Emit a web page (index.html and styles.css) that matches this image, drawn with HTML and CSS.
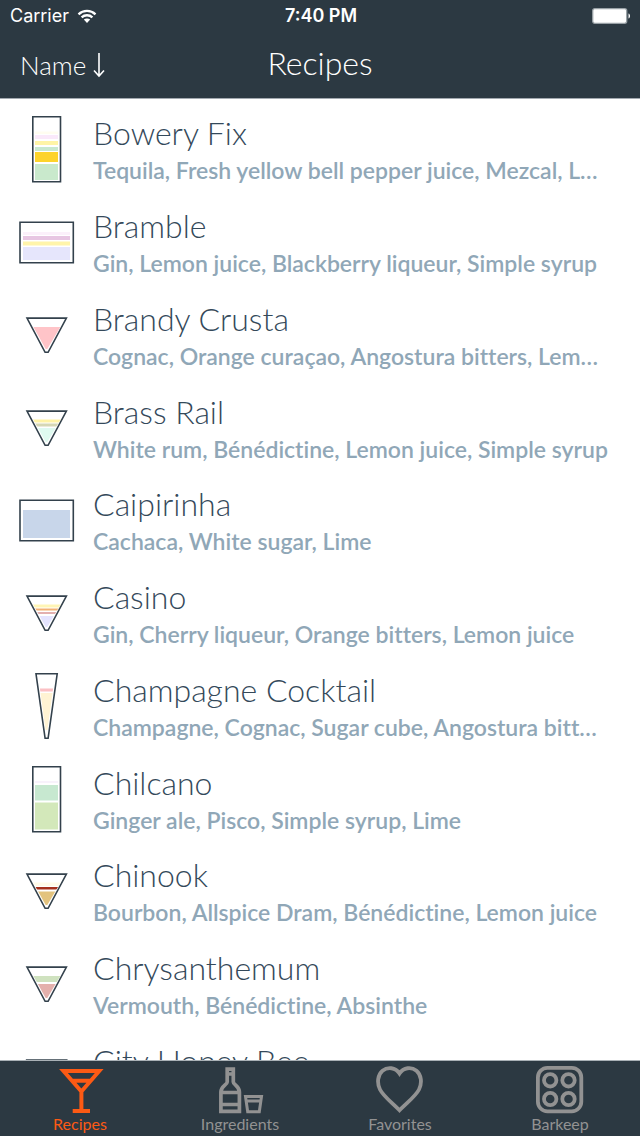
FILE: index.html
```html
<!DOCTYPE html>
<html lang="en">
<head>
<meta charset="utf-8">
<meta name="viewport" content="width=device-width">
<title>Recipes</title>
<link rel="stylesheet" href="styles.css">
</head>
<body>
<svg class="defs" aria-hidden="true">
  <defs>
    <clipPath id="cone"><path d="M11.5 19H46.5L29.3 48H27.7Z"/></clipPath>
    <clipPath id="fluted"><path d="M20.5 6H36.5L29.5 58H27.5Z"/></clipPath>
    <symbol id="highball" viewBox="0 0 57 69"><path class="outline" d="M14.8 1.8H42.5V66.8H14.8Z"/></symbol>
    <symbol id="rocks" viewBox="0 0 57 69"><path class="outline" d="M2 14.2H55.3V54.8H2Z"/></symbol>
    <symbol id="coupe" viewBox="0 0 57 69"><path class="outline" d="M9 17.1H48.4L30.1 51.3H27.1Z"/></symbol>
    <symbol id="flute" viewBox="0 0 57 69"><path class="outline" d="M18 1.8H39.2L30.1 66.3H27.1Z"/></symbol>
  </defs>
</svg>
<header class="top">
  <div class="status">
    <div class="carrier">Carrier
      <svg class="wifi" viewBox="0 0 20 15" aria-hidden="true"><path d="M1.5 5.3C6.3.7 13.7.7 18.500 5.300M4.600 8.400C7.700 5.500 12.300 5.500 15.400 8.400" fill="none" stroke="#fff" stroke-width="2.300"/><path d="M6.800 10.600C8.700 9 11.300 9 13.200 10.600L10 14Z" fill="#fff"/></svg>
    </div>
    <time class="clock">7:40 PM</time>
    <svg class="battery" viewBox="0 0 40 16" aria-hidden="true"><rect x=".7" y=".7" width="34" height="14.600" rx="2" fill="#fff" stroke="#98a0a5" stroke-width="1.300"/><path d="M36.500 5.500C38.500 6 38.500 10 36.500 10.500Z" fill="#fff"/></svg>
  </div>
  <nav class="navbar">
    <button class="sort" type="button">Name
      <svg class="arrow" viewBox="0 0 12 26" aria-hidden="true"><path d="M6 1V24M1 18.500L6 24L11 18.500" fill="none" stroke="#fff" stroke-width="1.600"/></svg>
    </button>
    <h1 class="title">Recipes</h1>
  </nav>
</header>
<main class="content">
  <ul class="recipes">
    <li class="recipe">
      <svg class="glass" viewBox="0 0 57 69" aria-hidden="true"><use href="#highball"/><path fill="#fffdf0" d="M17 16.500h23v2.500H17z"/><path fill="#fae9fa" d="M17 20h23v4H17z"/><path fill="#fff4a6" d="M17 26h23v4H17z"/><path fill="#c8e8cf" d="M17 32h23v4H17z"/><path fill="#fdd32b" d="M17 37h23v10H17z"/><path fill="#c9e9cc" d="M17 49h23v16H17z"/></svg>
      <div class="info"><h2 class="name">Bowery Fix</h2><p class="parts">Tequila, Fresh yellow bell pepper juice, Mezcal, L…</p></div>
    </li>
    <li class="recipe">
      <svg class="glass" viewBox="0 0 57 69" aria-hidden="true"><use href="#rocks"/><path fill="#fbf0fa" d="M5 24h47v3H5z"/><path fill="#e7c6e2" d="M5 28h47v4H5z"/><path fill="#fff4aa" d="M5 33.500h47v4H5z"/><path fill="#e6e6fc" d="M5 39h47v13H5z"/></svg>
      <div class="info"><h2 class="name">Bramble</h2><p class="parts">Gin, Lemon juice, Blackberry liqueur, Simple syrup</p></div>
    </li>
    <li class="recipe">
      <svg class="glass" viewBox="0 0 57 69" aria-hidden="true"><use href="#coupe"/><g clip-path="url(#cone)"><path fill="#ffc4c8" d="M8 26h42v23H8z"/></g></svg>
      <div class="info"><h2 class="name">Brandy Crusta</h2><p class="parts">Cognac, Orange curaçao, Angostura bitters, Lem…</p></div>
    </li>
    <li class="recipe">
      <svg class="glass" viewBox="0 0 57 69" aria-hidden="true"><use href="#coupe"/><g clip-path="url(#cone)"><path fill="#fff3a5" d="M8 25.500h42v3H8z"/><path fill="#d6d7b4" d="M8 29.500h42v3H8z"/><path fill="#dffaf0" d="M8 34h42v15H8z"/></g></svg>
      <div class="info"><h2 class="name">Brass Rail</h2><p class="parts">White rum, Bénédictine, Lemon juice, Simple syrup</p></div>
    </li>
    <li class="recipe">
      <svg class="glass" viewBox="0 0 57 69" aria-hidden="true"><use href="#rocks"/><path fill="#c8d6ea" d="M5 24h47v28H5z"/></svg>
      <div class="info"><h2 class="name">Caipirinha</h2><p class="parts">Cachaca, White sugar, Lime</p></div>
    </li>
    <li class="recipe">
      <svg class="glass" viewBox="0 0 57 69" aria-hidden="true"><use href="#coupe"/><g clip-path="url(#cone)"><path fill="#fff5b5" d="M8 25.500h42v3H8z"/><path fill="#f3b173" d="M8 29.500h42v2H8z"/><path fill="#e3b0b0" d="M8 33h42v2H8z"/><path fill="#e4e4ff" d="M8 37h42v12H8z"/></g></svg>
      <div class="info"><h2 class="name">Casino</h2><p class="parts">Gin, Cherry liqueur, Orange bitters, Lemon juice</p></div>
    </li>
    <li class="recipe">
      <svg class="glass" viewBox="0 0 57 69" aria-hidden="true"><use href="#flute"/><g clip-path="url(#fluted)"><path fill="#fbc0c4" d="M17 16.500h23v3H17z"/><path fill="#fff3d3" d="M17 21h23v40H17z"/></g></svg>
      <div class="info"><h2 class="name">Champagne Cocktail</h2><p class="parts">Champagne, Cognac, Sugar cube, Angostura bitt…</p></div>
    </li>
    <li class="recipe">
      <svg class="glass" viewBox="0 0 57 69" aria-hidden="true"><use href="#highball"/><path fill="#f8f2fb" d="M17 16h23v2H17z"/><path fill="#c7e8d0" d="M17 20h23v15.500H17z"/><path fill="#d3e8ba" d="M17 37.500h23v27H17z"/></svg>
      <div class="info"><h2 class="name">Chilcano</h2><p class="parts">Ginger ale, Pisco, Simple syrup, Lime</p></div>
    </li>
    <li class="recipe">
      <svg class="glass" viewBox="0 0 57 69" aria-hidden="true"><use href="#coupe"/><g clip-path="url(#cone)"><path fill="#fffbe9" d="M8 25.500h42v3.500H8z"/><path fill="#a5301c" d="M8 30h42v2.500H8z"/><path fill="#e3c37e" d="M8 34.500h42v15H8z"/></g></svg>
      <div class="info"><h2 class="name">Chinook</h2><p class="parts">Bourbon, Allspice Dram, Bénédictine, Lemon juice</p></div>
    </li>
    <li class="recipe">
      <svg class="glass" viewBox="0 0 57 69" aria-hidden="true"><use href="#coupe"/><g clip-path="url(#cone)"><path fill="#cfe2bf" d="M8 26h42v6H8z"/><path fill="#e4b0ac" d="M8 34h42v15H8z"/></g></svg>
      <div class="info"><h2 class="name">Chrysanthemum</h2><p class="parts">Vermouth, Bénédictine, Absinthe</p></div>
    </li>
    <li class="recipe">
      <svg class="glass" viewBox="0 0 57 69" aria-hidden="true"><use href="#coupe"/></svg>
      <div class="info"><h2 class="name">City Honey Bee</h2></div>
    </li>
  </ul>
</main>
<nav class="tabs">
  <button class="tab active" type="button">
    <svg class="icon" viewBox="0 0 48 48" aria-hidden="true"><path d="M7.500 5H43.200L25.400 25.500ZM17 14.800H34M25.400 25V45M16.700 45H34" fill="none" stroke="currentColor" stroke-width="4"/></svg>
    <span>Recipes</span>
  </button>
  <button class="tab" type="button">
    <svg class="icon" viewBox="0 0 48 48" aria-hidden="true"><path d="M11.200 3.100H17.300V16C17.300 18.500 23.400 20 23.400 26V45.400H4.900V26C4.900 20 11.200 18.500 11.200 16ZM11.200 8H17.300M5 26.500H23.400M5 38.500H23.400" fill="none" stroke="currentColor" stroke-width="3.700"/><path d="M29.500 30.500H45.500L43.300 45.700H31.700ZM30 35H45" fill="none" stroke="currentColor" stroke-width="3"/></svg>
    <span>Ingredients</span>
  </button>
  <button class="tab" type="button">
    <svg class="icon" viewBox="0 0 48 48" aria-hidden="true"><path d="M23.500 7.500C19.500 1.200 11.500.7 6.500 4.800C1.500 9 .8 17 4 23.500C7.500 30.500 16 36.500 23.500 44.300C31 36.500 39.500 30.500 43 23.500C46.200 17 45.500 9 40.500 4.800C35.500.7 27.500 1.200 23.500 7.500Z" fill="none" stroke="currentColor" stroke-width="3.800"/></svg>
    <span>Favorites</span>
  </button>
  <button class="tab" type="button">
    <svg class="icon" viewBox="0 0 48 48" aria-hidden="true"><g fill="none" stroke="currentColor" stroke-width="3.800"><rect x="1.900" y="1.900" width="43.400" height="43.400" rx="9.500"/><circle cx="14.200" cy="14.300" r="6.200"/><circle cx="32.500" cy="14.300" r="6.200"/><circle cx="14.200" cy="33" r="6.200"/><circle cx="32.500" cy="33" r="6.200"/></g></svg>
    <span>Barkeep</span>
  </button>
</nav>
</body>
</html>
```

FILE: styles.css
```css
* {
  box-sizing: border-box;
}

body {
  margin: 0;
  height: 100vh;
  display: flex;
  flex-direction: column;
  background: #fff;
  font-family: Lato, "Open Sans", sans-serif;
  font-variant-ligatures: none;
}

button {
  padding: 0;
  border: 0;
  background: none;
  color: inherit;
  font: inherit;
}

.defs {
  position: absolute;
  width: 0;
  height: 0;
}

.top {
  flex: none;
  background: #2c3942;
  border-bottom: 1px solid #a3a9b0;
  color: #fff;
}

.status {
  display: grid;
  grid-template-columns: 1fr auto 1fr;
  align-items: center;
  height: 32px;
  padding: 0 8px 0 10px;
  font: 18px/32px Inter, sans-serif;
}

.carrier {
  display: flex;
  align-items: center;
  gap: 8px;
}

.wifi {
  width: 20px;
  height: 15px;
}

.clock {
  font-weight: 600;
}

.battery {
  justify-self: end;
  width: 40px;
  height: 16px;
}

.navbar {
  display: grid;
  grid-template-columns: 1fr auto 1fr;
  align-items: center;
  height: 66px;
  padding: 0 20px;
}

.sort {
  display: flex;
  align-items: center;
  gap: 7px;
  font-size: 26px;
  font-weight: 300;
}

.arrow {
  width: 12px;
  height: 26px;
}

.title {
  margin: 0;
  padding-bottom: 6px;
  font-size: 32px;
  font-weight: 300;
}

.content {
  flex: 1;
  min-height: 0;
  overflow: hidden;
}

.recipes {
  display: grid;
  grid-auto-rows: 93px 93px 93px 92px;
  margin: 0;
  padding: 4px 18px 0;
  list-style: none;
}

.recipe {
  display: flex;
  align-items: flex-start;
  gap: 18px;
  padding-top: 12px;
}

.glass {
  flex: none;
  width: 57px;
  height: 69px;
}

.outline {
  fill: #fff;
  stroke: #33414c;
  stroke-width: 1.6px;
}

.info {
  min-width: 0;
  white-space: nowrap;
}

.name {
  margin: 0;
  color: #34495a;
  font-size: 32px;
  font-weight: 300;
  line-height: 36px;
}

.parts {
  margin: 0;
  color: #90a7b7;
  font-size: 23px;
  font-weight: 600;
  line-height: 38px;
}

.tabs {
  flex: none;
  display: grid;
  grid-template-columns: repeat(4, 1fr);
  height: 76px;
  border-top: 1px solid #a9b1b6;
  background: #2c3942;
  color: #929292;
}

.tab {
  display: flex;
  flex-direction: column;
  align-items: center;
  padding-top: 5px;
  font-size: 16px;
  line-height: 20px;
}

.active {
  color: #fc5a14;
}

.icon {
  width: 48px;
  height: 48px;
}
```
